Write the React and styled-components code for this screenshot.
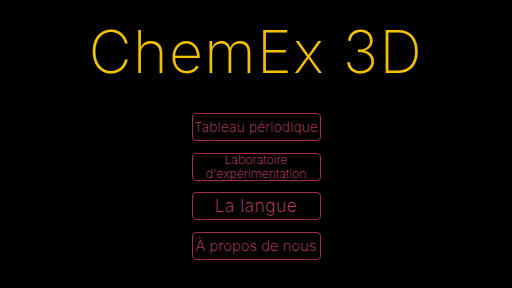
import React from "react";
import styled, { createGlobalStyle } from "styled-components";

const GlobalStyle = createGlobalStyle`
  html, body {
    margin: 0;
    padding: 0;
    background: #000;
  }
  body {
    width: 512px;
    height: 288px;
    overflow: hidden;
  }
`;

const Screen = styled.div`
  display: flex;
  flex-direction: column;
  align-items: center;
  width: 512px;
  height: 288px;
  background: #000;
  font-family: Inter, "DejaVu Sans", sans-serif;
`;

const Title = styled.h1`
  margin: 22px 0 0 0;
  font-size: 59px;
  line-height: 59px;
  font-weight: 180;
  color: #f2c200;
  letter-spacing: 1.4px;
`;

const Menu = styled.div`
  display: flex;
  flex-direction: column;
  gap: 11.7px;
  margin-top: 32px;
`;

const MenuButton = styled.button`
  display: flex;
  align-items: center;
  justify-content: center;
  box-sizing: border-box;
  width: 129px;
  height: 28px;
  padding: 0 2px;
  background: transparent;
  border: 1px solid #a2285a;
  border-radius: 4px;
  color: #dc4275;
  font-family: inherit;
  font-weight: 250;
  font-size: ${(p) => p.$size}px;
  line-height: ${(p) => p.$lh || 1.1};
  letter-spacing: ${(p) => p.$ls || 0}px;
  white-space: ${(p) => (p.$wrap ? "normal" : "nowrap")};
  text-align: center;
  cursor: pointer;
`;

const items = [
  { label: "Tableau périodique", size: 13.5, ls: 0.3 },
  { label: "Laboratoire d'expérimentation", size: 12.3, lh: 1.12, wrap: true },
  { label: "La langue", size: 17, ls: 0.7 },
  { label: "À propos de nous", size: 14.5, ls: 0.2 },
];

export default function App() {
  return (
    <Screen>
      <GlobalStyle />
      <Title>ChemEx 3D</Title>
      <Menu>
        {items.map((item) => (
          <MenuButton
            key={item.label}
            $size={item.size}
            $lh={item.lh}
            $ls={item.ls}
            $wrap={item.wrap}
          >
            {item.label}
          </MenuButton>
        ))}
      </Menu>
    </Screen>
  );
}
